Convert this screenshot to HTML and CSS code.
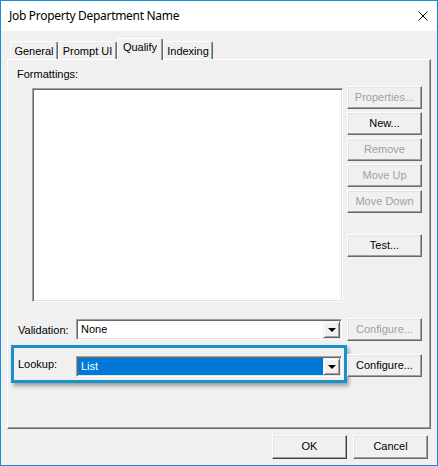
FILE: index.html
```html
<!DOCTYPE html>
<html lang="en">
<head>
    <meta charset="UTF-8">
    <meta name="viewport" content="width=device-width, initial-scale=1.0">
    <title>Job Property Department Name</title>
    <link rel="stylesheet" href="styles.css">
</head>
<body>

<div class="window">
    <div class="titlebar">
        <span class="title">Job Property Department Name</span>
        <svg class="close" width="10" height="10" viewBox="0 0 10 10">
            <path d="M0.5 0.5 L9.5 9.5 M9.5 0.5 L0.5 9.5" stroke="#000" stroke-width="1" fill="none"/>
        </svg>
    </div>

    <div class="dialog">
        <div class="tabs">
            <div class="tab tab-general">General</div>
            <div class="tab tab-prompt">Prompt UI</div>
            <div class="tab tab-qualify active">Qualify</div>
            <div class="tab tab-indexing">Indexing</div>
        </div>

        <div class="panel">
            <div class="caption">Formattings:</div>

            <div class="list-row">
                <div class="listbox"></div>
                <div class="btn-column">
                    <div class="btn disabled">Properties...</div>
                    <div class="btn">New...</div>
                    <div class="btn disabled">Remove</div>
                    <div class="btn disabled">Move Up</div>
                    <div class="btn disabled">Move Down</div>
                    <div class="btn btn-test">Test...</div>
                </div>
            </div>

            <div class="field-row">
                <div class="field-label">Validation:</div>
                <div class="combo">
                    <div class="combo-text">None</div>
                    <div class="drop"><span class="arrow"></span></div>
                </div>
                <div class="btn disabled btn-side">Configure...</div>
            </div>

            <div class="lookup-row">
                <div class="lookup-frame">
                    <div class="field-label">Lookup:</div>
                    <div class="combo">
                        <div class="combo-text selected">List</div>
                        <div class="drop"><span class="arrow"></span></div>
                    </div>
                </div>
                <div class="btn btn-lookup">Configure...</div>
            </div>
        </div>

        <div class="footer">
            <div class="btn btn-footer btn-default">OK</div>
            <div class="btn btn-footer">Cancel</div>
        </div>
    </div>
</div>

</body>
</html>
```

FILE: styles.css
```css
html, body {
    margin: 0;
    padding: 0;
}
body {
    width: 438px;
    height: 466px;
    overflow: hidden;
    background-color: #f0f0f0;
    font-family: "Liberation Sans", Arial, sans-serif;
    font-size: 11px;
    color: #000;
}

.window {
    box-sizing: border-box;
    width: 438px;
    height: 466px;
    border: 1px solid #1a8ad4;
    display: flex;
    flex-direction: column;
    background-color: #f0f0f0;
}

/* title bar */
.titlebar {
    height: 30px;
    flex: none;
    background-color: #fff;
    display: flex;
    align-items: center;
    justify-content: space-between;
    padding: 0 9px 0 8px;
}
.title {
    font-family: "Noto Sans", "Open Sans", sans-serif;
    font-size: 12px;
    letter-spacing: -0.3px;
    color: #000;
    position: relative;
    top: -1px;
}
.close {
    display: block;
}

.dialog {
    flex: 1;
    display: flex;
    flex-direction: column;
}

/* tabs */
.tabs {
    display: flex;
    align-items: flex-end;
    height: 21px;
    margin-top: 7px;
    padding-left: 9px;
    position: relative;
    z-index: 2;
}
.tab {
    box-sizing: border-box;
    height: 18px;
    line-height: 16px;
    text-align: center;
    background-color: #f0f0f0;
    border-top: 1px solid #fff;
    border-left: 1px solid #fff;
    border-right: 1px solid #696969;
    box-shadow: inset -1px 0 #a0a0a0;
    border-radius: 2px 2px 0 0;
    padding-top: 1px;
}
.tab-general { width: 48px; }
.tab-prompt { width: 59px; }
.tab-qualify { width: 46px; }
.tab-indexing { width: 50px; }
.tab.active {
    height: 22px;
    margin-bottom: -1px;
    padding-top: 0;
    line-height: 17px;
}

/* tab page */
.panel {
    box-sizing: border-box;
    width: 424px;
    height: 370px;
    margin-left: 6px;
    border-top: 1px solid #fff;
    border-left: 1px solid #fff;
    border-right: 1px solid #696969;
    border-bottom: 1px solid #696969;
    box-shadow: inset -1px -1px #a0a0a0;
    display: flex;
    flex-direction: column;
    padding-left: 9px;
}
.caption {
    margin-top: 8px;
    line-height: 13px;
}

.list-row {
    display: flex;
    align-items: flex-start;
    margin-top: 5px;
}
.listbox {
    box-sizing: border-box;
    width: 311px;
    height: 214px;
    margin-left: 15px;
    margin-top: 2px;
    background-color: #fff;
    border-top: 1px solid #a0a0a0;
    border-left: 1px solid #a0a0a0;
    border-right: 1px solid #fff;
    border-bottom: 1px solid #fff;
    box-shadow: inset 1px 1px #696969, inset -1px -1px #e3e3e3;
}
.btn-column {
    display: flex;
    flex-direction: column;
    gap: 3px;
    margin-left: 4px;
}
.btn-test {
    margin-top: 18px;
}

/* buttons */
.btn {
    box-sizing: border-box;
    width: 75px;
    height: 23px;
    line-height: 20px;
    text-align: center;
    background-color: #f0f0f0;
    border-top: 1px solid #fff;
    border-left: 1px solid #fff;
    border-right: 1px solid #696969;
    border-bottom: 1px solid #696969;
    box-shadow: inset -1px -1px #a0a0a0, inset 1px 1px #e3e3e3;
    color: #000;
}
.btn.disabled {
    color: #a0a0a0;
}

/* validation row */
.field-row {
    display: flex;
    align-items: center;
    margin-top: 16px;
    height: 23px;
}
.field-label {
    width: 59px;
    padding-left: 1px;
    box-sizing: border-box;
}
.combo {
    box-sizing: border-box;
    width: 266px;
    height: 21px;
    display: flex;
    background-color: #fff;
    border-top: 1px solid #a0a0a0;
    border-left: 1px solid #a0a0a0;
    border-right: 1px solid #fff;
    border-bottom: 1px solid #fff;
    box-shadow: inset 1px 1px #696969, inset -1px -1px #e3e3e3;
    padding: 1px;
}
.combo-text {
    flex: 1;
    line-height: 17px;
    padding-left: 3px;
}
.combo-text.selected {
    background-color: #0078d7;
    color: #fff;
}
.drop {
    box-sizing: border-box;
    width: 17px;
    height: 17px;
    background-color: #f0f0f0;
    border-top: 1px solid #f0f0f0;
    border-left: 1px solid #f0f0f0;
    border-right: 1px solid #696969;
    border-bottom: 1px solid #696969;
    box-shadow: inset 1px 1px #fff, inset -1px -1px #a0a0a0;
    display: flex;
    align-items: center;
    justify-content: center;
}
.arrow {
    width: 0;
    height: 0;
    border-left: 4px solid transparent;
    border-right: 4px solid transparent;
    border-top: 4px solid #000;
    margin-top: 1px;
}
.btn-side {
    margin-left: 5px;
}

/* lookup row with its callout frame */
.lookup-row {
    display: flex;
    align-items: flex-start;
    margin-top: 4px;
    margin-left: -6px;
}
.lookup-frame {
    box-sizing: border-box;
    width: 336px;
    height: 38px;
    border: 3px solid #1b91cc;
    box-shadow: 2px 3px 4px rgba(0, 0, 0, 0.35);
    display: flex;
    align-items: center;
    padding: 5px 0 1px 4px;
}
.lookup-frame .field-label {
    width: 58px;
    padding-left: 0;
    margin-top: -4px;
}
.lookup-frame .combo {
    margin-top: 1px;
}
.btn-lookup {
    margin-top: 9px;
}

/* OK / Cancel */
.footer {
    display: flex;
    justify-content: flex-end;
    gap: 6px;
    margin-top: 6px;
    padding-right: 9px;
}
.btn-footer {
    height: 24px;
    line-height: 21px;
}
.btn-default {
    border-right-color: #404040;
    border-bottom-color: #404040;
}
```
